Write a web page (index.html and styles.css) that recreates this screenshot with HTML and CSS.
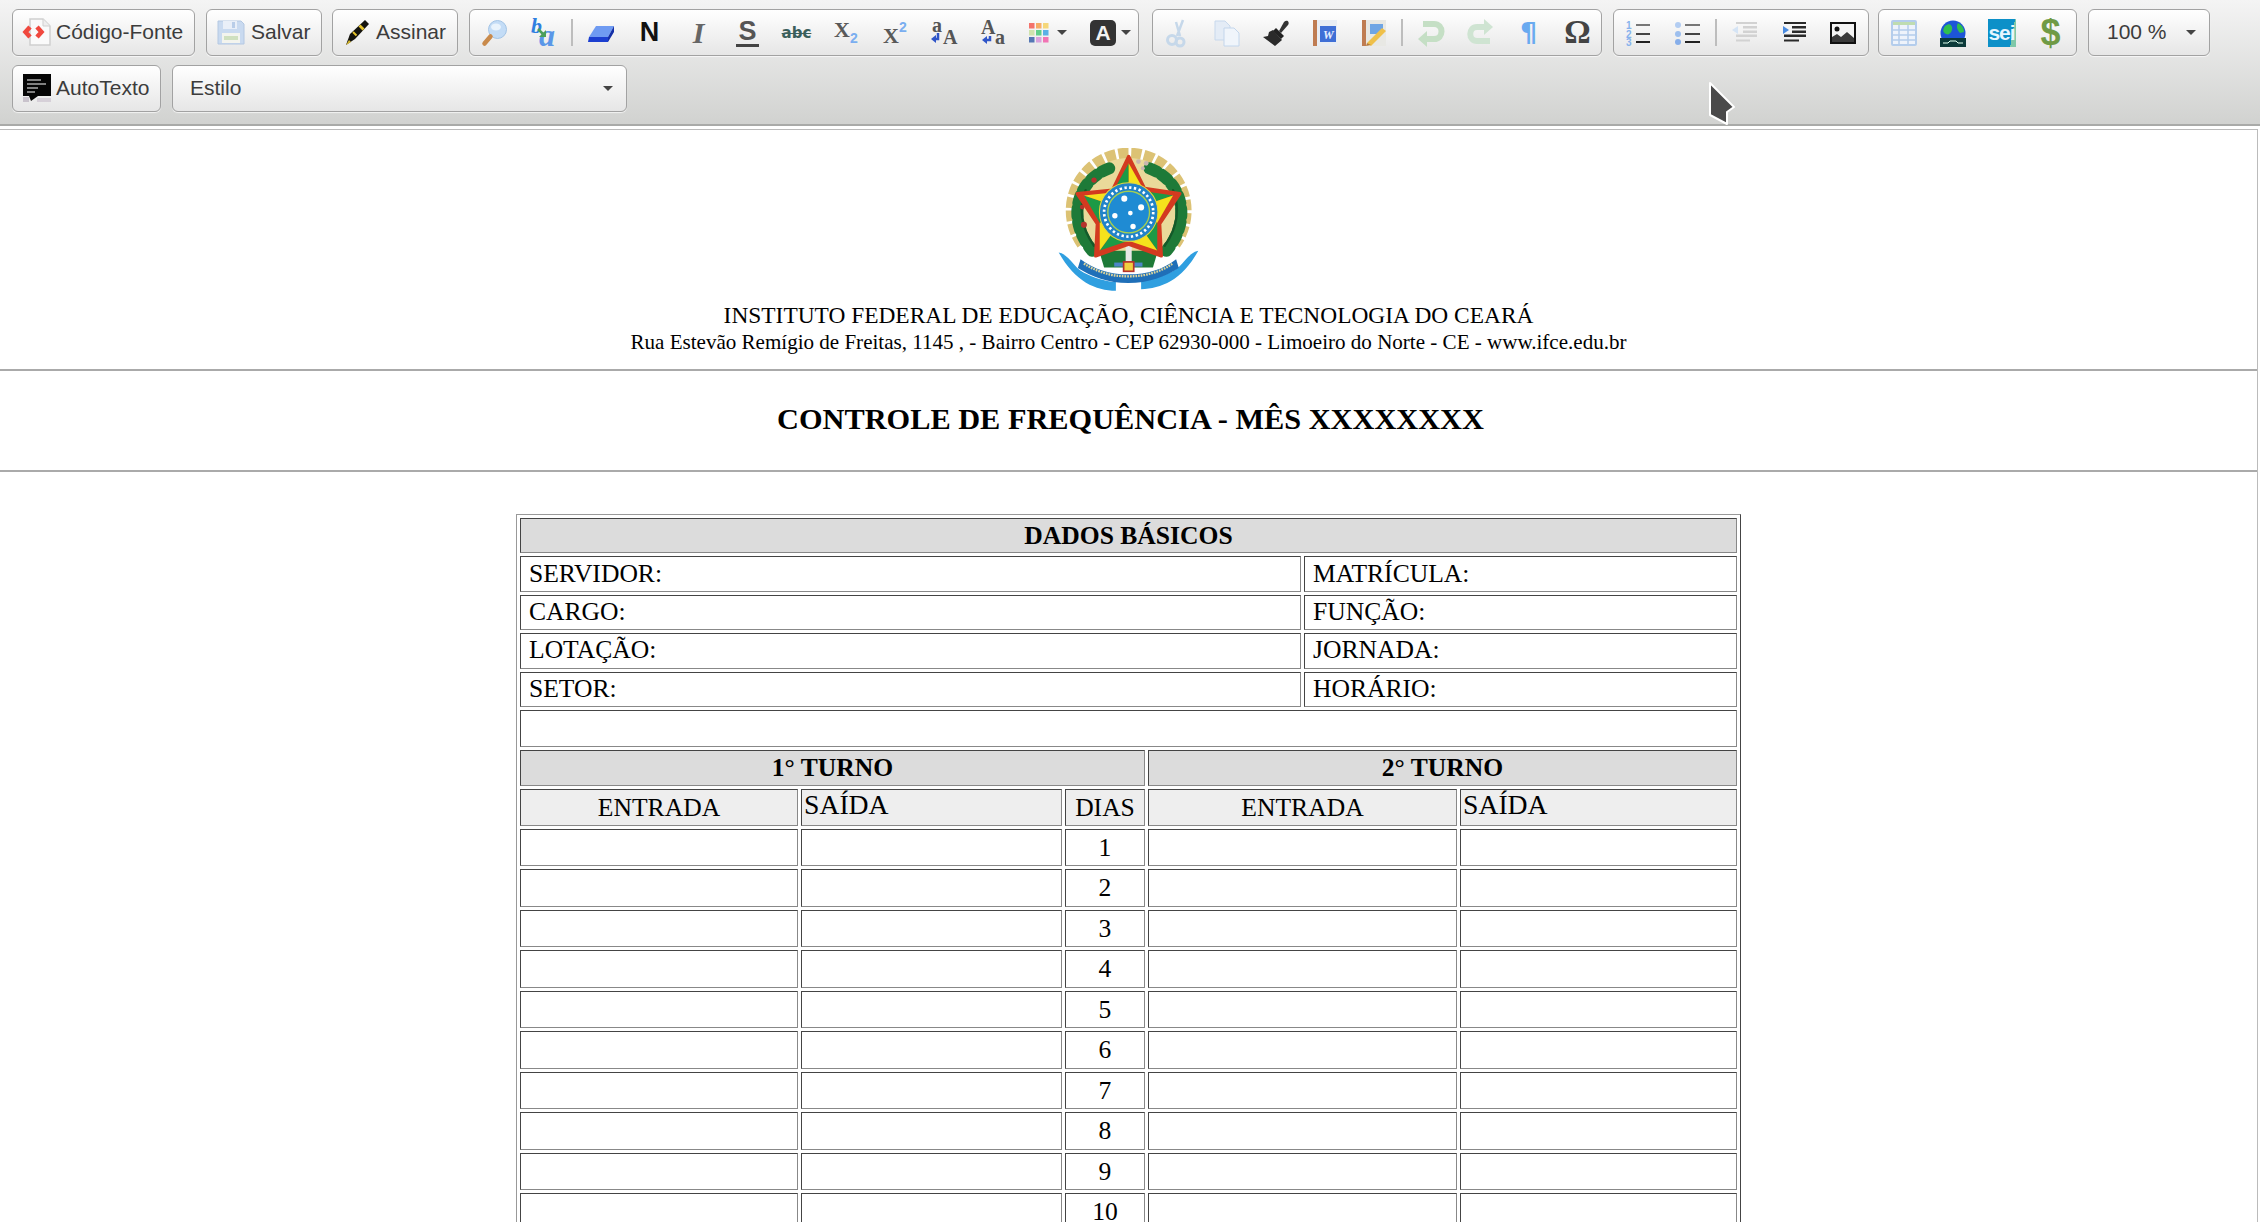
FILE: index.html
```html
<!DOCTYPE html>
<html lang="pt-BR">
<head>
<meta charset="utf-8">
<title>Controle de Frequência</title>
<link rel="stylesheet" href="styles.css">
</head>
<body>
<div class="page">
<header class="toolbar">
  <div class="tb-row">
    <button class="btn btn-code"><svg class="ic" viewBox="0 0 28 28"><path d="M7 1h13l7 7v19H7z" fill="#fafafa" stroke="#cfcfcf" stroke-width="1.500"/><path d="M20 1v7h7" fill="#eee" stroke="#cfcfcf"/><path d="M7 9 2.500 14 7 19M14 9 18.500 14 14 19" fill="none" stroke="#f0483e" stroke-width="4.500"/></svg><span>Código-Fonte</span></button>
    <button class="btn btn-save"><svg class="ic" viewBox="0 0 28 28"><path d="M1 3h23l3 3v20H1z" fill="#c9daf0" stroke="#b4c8e2"/><rect x="6" y="3" width="14" height="8" fill="#e9eff8"/><rect x="15" y="4" width="3" height="6" fill="#b9cde8"/><rect x="5" y="15" width="18" height="10" fill="#f3f4ee"/><rect x="7" y="18" width="14" height="4" fill="#cfe0bf"/></svg><span>Salvar</span></button>
    <button class="btn btn-sign"><svg class="ic" viewBox="0 0 28 28"><path d="M3 27 7 16 22 2l4 4-14 15z" fill="#15140f"/><path d="M15.500 8.500l4 4 2-2-4-4z" fill="#e6c42c"/><path d="M10 14l3.500 3.500" stroke="#e6c42c" stroke-width="2"/><path d="M3 27l3-5 2 2z" fill="#d8b92a"/></svg><span>Assinar</span></button>

    <div class="group grp-format">
      <button class="tool"><svg class="ic" viewBox="0 0 28 28"><circle cx="16.500" cy="10.500" r="9" fill="#c3dcf6" stroke="#a3c4e6"/><ellipse cx="15" cy="8" rx="5" ry="3.500" fill="#e9f3fc"/><path d="M9.500 17.500 3.500 24.500" stroke="#c98a4b" stroke-width="4.500" stroke-linecap="round"/></svg></button>
      <button class="tool"><svg class="ic" viewBox="0 0 28 28"><text x="1" y="14" class="t-rep">b</text><text x="9" y="26.500" class="t-rep t-rep2">a</text><path d="M8 10l6 6" stroke="#4ba05a" stroke-width="2.500"/><path d="M16 11v7h-7z" fill="#4ba05a"/></svg></button>
      <i class="sep"></i>
      <button class="tool"><svg class="ic" viewBox="0 0 28 28"><path d="M9 7h18l-6 11H2z" fill="#6f9bf2"/><path d="M2 18h19v5H1z" fill="#1c3fd0"/><path d="M21 18l6-11v6l-6 10z" fill="#1430a8"/></svg></button>
      <button class="tool"><span class="g-bold">N</span></button>
      <button class="tool"><span class="g-ital">I</span></button>
      <button class="tool"><span class="g-under">S</span></button>
      <button class="tool"><span class="g-strike">abc</span></button>
      <button class="tool"><svg class="ic" viewBox="0 0 28 28"><text x="2" y="18" class="t-x">X</text><text x="18" y="24" class="t-sub">2</text></svg></button>
      <button class="tool"><svg class="ic" viewBox="0 0 28 28"><text x="2" y="24" class="t-x">X</text><text x="18" y="13" class="t-sub">2</text></svg></button>
      <button class="tool"><svg class="ic" viewBox="0 0 28 28"><text x="2" y="12.500" class="t-case">a</text><text x="13" y="25" class="t-case">A</text><path d="M8 14v6H5" fill="none" stroke="#2f55c8" stroke-width="2.500"/><path d="M1 20l5-4v8z" fill="#2f55c8"/></svg></button>
      <button class="tool"><svg class="ic" viewBox="0 0 28 28"><text x="2" y="15" class="t-case">A</text><text x="16" y="25" class="t-case">a</text><path d="M11 17v4H7" fill="none" stroke="#2f55c8" stroke-width="2.500"/><path d="M3 21l5-4v8z" fill="#2f55c8"/></svg></button>
      <button class="tool tool-colors"><svg class="ic-sw" viewBox="0 0 20 20"><rect width="5.500" height="5.500" fill="#f4736c"/><rect x="7" width="5.500" height="5.500" fill="#f6ad67"/><rect x="14" width="5.500" height="5.500" fill="#f5d77a"/><rect y="7" width="5.500" height="5.500" fill="#cfe3ad"/><rect x="7" y="7" width="5.500" height="5.500" fill="#61cf8a"/><rect x="14" y="7" width="5.500" height="5.500" fill="#5ab1e6"/><rect y="14" width="5.500" height="5.500" fill="#5577b4"/><rect x="7" y="14" width="5.500" height="5.500" fill="#d9a2dd"/><rect x="14" y="14" width="5.500" height="5.500" fill="#f174b4"/></svg><b class="caret"></b></button>
      <button class="tool tool-font"><span class="g-abox">A</span><b class="caret"></b></button>
    </div>

    <div class="group grp-edit">
      <button class="tool"><svg class="ic" viewBox="0 0 28 28" fill="none" stroke="#c6d8ea"><path d="M19 1 13 17M12 3l4 14" stroke-width="2.500"/><circle cx="8" cy="21" r="4.500" stroke-width="3"/><circle cx="16" cy="23" r="4" stroke-width="3"/></svg></button>
      <button class="tool"><svg class="ic" viewBox="0 0 28 28"><path d="M2 2h10l5 5v14H2z" fill="#e4ecf6" stroke="#c7d8ec"/><path d="M11 9h10l5 5v13H11z" fill="#f0f5fb" stroke="#c3d6ec"/></svg></button>
      <button class="tool"><svg class="ic" viewBox="0 0 28 28"><path d="M17 12 22 3c3-3 6 0 4 3l-7 8z" fill="#333"/><path d="M14 9l8 8-3 3-8-8z" fill="#222"/><path d="M11 11l9 10-7 6-12-9 5-1 1-4z" fill="#2a2a2a"/></svg></button>
      <button class="tool"><svg class="ic" viewBox="0 0 28 28"><rect x="2" y="1" width="24" height="26" fill="#e8edf4"/><rect x="2" y="1" width="4" height="26" fill="#bf7c52"/><rect x="9" y="7" width="16" height="16" fill="#3f6fd6"/><text x="12" y="20" class="t-w">W</text></svg></button>
      <button class="tool"><svg class="ic" viewBox="0 0 28 28"><rect x="2" y="1" width="24" height="26" fill="#e8e8e4"/><rect x="2" y="1" width="4" height="26" fill="#bf7c52"/><rect x="10" y="5" width="13" height="10" fill="#6fa5e4"/><path d="M7 24 22 9l4 3-15 15z" fill="#efc04a"/><path d="M7 24l-1 3 5-1z" fill="#b77a3a"/></svg></button>
      <i class="sep"></i>
      <button class="tool"><svg class="ic" viewBox="0 0 28 28" fill="none" stroke="#c5dfc5" stroke-width="6"><path d="M6 5h11c10 0 10 15 0 15H8"/><path d="M10 12 1 20l9 8z" fill="#c5dfc5" stroke="none"/></svg></button>
      <button class="tool"><svg class="ic" viewBox="0 0 28 28" fill="none" stroke="#cfe4d2" stroke-width="6"><path d="M24 22H11C2 22 2 8 11 8h9"/><path d="M18 0l9 8-9 8z" fill="#cfe4d2" stroke="none"/></svg></button>
      <button class="tool"><span class="g-para">¶</span></button>
      <button class="tool"><span class="g-omega">Ω</span></button>
    </div>

    <div class="group grp-list">
      <button class="tool"><svg class="ic" viewBox="0 0 28 28"><text x="1" y="10" class="t-num">1</text><text x="1" y="18.500" class="t-num">2</text><text x="1" y="27" class="t-num">3</text><rect x="11" y="5" width="14" height="2" fill="#777"/><rect x="11" y="14" width="14" height="2" fill="#444"/><rect x="11" y="22" width="14" height="2" fill="#222"/></svg></button>
      <button class="tool"><svg class="ic" viewBox="0 0 28 28"><circle cx="4" cy="6" r="3" fill="#b3cdf2"/><circle cx="4" cy="15" r="3" fill="#9dbfee"/><circle cx="4" cy="23" r="3" fill="#86aeea"/><rect x="11" y="5" width="15" height="2" fill="#777"/><rect x="11" y="14" width="15" height="2" fill="#444"/><rect x="11" y="22" width="15" height="2" fill="#222"/></svg></button>
      <i class="sep"></i>
      <button class="tool"><svg class="ic" viewBox="0 0 28 28" fill="#d2d2d2"><rect x="5" y="3" width="21" height="2"/><rect x="12" y="7" width="14" height="2.500"/><rect x="12" y="11.500" width="14" height="2.500"/><rect x="5" y="15.500" width="21" height="2.500"/><rect x="5" y="20.500" width="14" height="2"/><path d="M1 11l6-4v8z" fill="#d5e4f5"/></svg></button>
      <button class="tool"><svg class="ic" viewBox="0 0 28 28" fill="#2a2a2a"><rect x="4" y="3" width="22" height="2"/><rect x="12" y="7" width="14" height="2.500"/><rect x="12" y="11.500" width="14" height="2.500"/><rect x="4" y="15.500" width="22" height="2.500"/><rect x="4" y="20.500" width="15" height="2"/><path d="M9 11 3 7v8z" fill="#4a8be0"/></svg></button>
      <button class="tool"><svg class="ic" viewBox="0 0 28 28"><rect x="2" y="4" width="24" height="20" fill="#f4f4f4" stroke="#111" stroke-width="2"/><circle cx="8" cy="10" r="2.500" fill="#111"/><path d="M3 23v-5l5-3 4 3 6-5 7 6v4z" fill="#3a3a3a"/></svg></button>
    </div>

    <div class="group grp-ins">
      <button class="tool"><svg class="ic" viewBox="0 0 28 28"><rect x="2" y="2" width="24" height="24" rx="1" fill="#eef3fb" stroke="#b4cdec" stroke-width="2"/><rect x="3" y="3" width="22" height="3" fill="#bfdcb0"/><path d="M3 11h22M3 16h22M3 21h22M9 6v20M18 6v20" stroke="#b4cdec" stroke-width="1.500"/></svg></button>
      <button class="tool"><svg class="ic" viewBox="0 0 28 28"><circle cx="14" cy="14" r="12.500" fill="#1d55d8"/><path d="M6 7c4-3 6-2 7 1s-2 9-6 7-3-5-1-8zM19 4c4 2 6 5 6 9l-4 1c-3-3-4-7-2-10z" fill="#2fbf4f"/><rect x="1" y="19" width="26" height="9" fill="#0c3a3a"/><path d="M4 24h5l2-2h6l2 2h5" stroke="#dfe" stroke-width="1" fill="none"/></svg></button>
      <button class="tool"><span class="g-sei">sei</span></button>
      <button class="tool"><span class="g-dollar">$</span></button>
    </div>

    <button class="btn btn-zoom"><span>100 %</span><b class="caret"></b></button>
  </div>

  <div class="tb-row">
    <button class="btn btn-auto"><svg class="ic" viewBox="0 0 28 28"><rect x="0" y="0" width="28" height="22" fill="#050505"/><path d="M6 22h9l-7 5z" fill="#050505"/><path d="M4 6h14M4 10h19M4 14h11M4 18h8" stroke="#a9a9a9" stroke-width="1.500"/><rect x="0" y="23" width="6" height="5" fill="#c9c3cc"/><rect x="14" y="24" width="14" height="4" fill="#d6d0d8"/></svg><span>AutoTexto</span></button>
    <button class="btn btn-style"><span>Estilo</span><b class="caret"></b></button>
  </div>
</header>

<main class="doc">
  <div class="letterhead">
    <svg class="emblem" viewBox="80 40 425 430">
      <path d="M155 325A170 170 0 1 1 431 325" fill="none" stroke="#dcc274" stroke-width="34" stroke-dasharray="30 8"/>
      <circle cx="293" cy="225" r="156" fill="#ead99a"/>
      <g fill="none" stroke="#1e7a38" stroke-linecap="round">
        <path d="M235 100C140 135 105 250 185 345" stroke-width="36" stroke-dasharray="24 16"/>
        <path d="M355 100C450 135 485 250 405 345" stroke-width="36" stroke-dasharray="24 16"/>
        <path d="M165 165C145 215 150 275 190 330" stroke="#14592a" stroke-width="7"/>
        <path d="M425 165C445 215 440 275 400 330" stroke="#14592a" stroke-width="7"/>
      </g>
      <circle cx="190" cy="135" r="8" fill="#b5322c"/><circle cx="160" cy="268" r="9" fill="#b5322c"/><circle cx="155" cy="215" r="7" fill="#b5322c"/>
      <circle cx="322" cy="80" r="7" fill="#c9b6b0"/><circle cx="345" cy="85" r="7" fill="#c9b6b0"/><circle cx="335" cy="100" r="6" fill="#c9b6b0"/>
      <path d="M85 350c30 5 45 45 75 60 30 15 60 25 95 28v26c-60-2-120-25-170-114z" fill="#2f9fe0"/>
      <path d="M500 345c-30 5-45 45-75 60-30 15-60 25-95 28v26c60-2 120-25 170-114z" fill="#2f9fe0"/>
      <path d="M150 370c40 30 85 45 142 45s105-15 142-45l8 26c-40 25-90 45-150 45s-110-20-150-45z" fill="#1f6fb8"/>
      <path d="M160 383c40 25 80 38 132 38s95-13 132-38" fill="none" stroke="#ddd49a" stroke-width="7" stroke-dasharray="5 3"/>
      <path d="M205 345h175l-15 50H220z" fill="#1e7a38"/>
      <rect x="284" y="320" width="18" height="60" fill="#e8e8e8"/>
      <rect x="250" y="380" width="84" height="12" fill="#4d86c8"/>
      <rect x="278" y="378" width="30" height="28" fill="#f0d040" stroke="#b5322c" stroke-width="5"/>
      <path d="M293 65 340 160 445 175 385 265 390 360 293 325 195 360 200 265 140 175 245 165z" fill="#d33a20" stroke="#d33a20" stroke-width="10" stroke-linejoin="round"/>
      <path d="M293 85 245 172 293 225z" fill="#1c9a46"/><path d="M293 85 340 168 293 225z" fill="#f5e21c"/>
      <path d="M425 181 340 168 293 225z" fill="#1c9a46"/><path d="M425 181 378 262 293 225z" fill="#f5e21c"/>
      <path d="M378 344 378 262 293 225z" fill="#1c9a46"/><path d="M378 344 293 315 293 225z" fill="#f5e21c"/>
      <path d="M207 344 293 315 293 225z" fill="#1c9a46"/><path d="M207 344 207 262 293 225z" fill="#f5e21c"/>
      <path d="M160 181 207 262 293 225z" fill="#1c9a46"/><path d="M160 181 245 172 293 225z" fill="#f5e21c"/>
      <circle cx="293" cy="230" r="87" fill="#2183c9" stroke="#e8d83a" stroke-width="3"/>
      <circle cx="293" cy="230" r="73" fill="none" stroke="#fff" stroke-width="8" stroke-dasharray="7 7.300"/>
      <circle cx="293" cy="230" r="62" fill="#1f8bd3" stroke="#a6cf52" stroke-width="4"/>
      <g fill="#fff"><circle cx="280" cy="190" r="9"/><circle cx="330" cy="216" r="9"/><circle cx="252" cy="241" r="8"/><circle cx="298" cy="233" r="7"/><circle cx="306" cy="273" r="8"/></g>
    </svg>
    <p class="lh-name">INSTITUTO FEDERAL DE EDUCAÇÃO, CIÊNCIA E TECNOLOGIA DO CEARÁ</p>
    <p class="lh-addr">Rua Estevão Remígio de Freitas, 1145 , - Bairro Centro - CEP 62930-000 - Limoeiro do Norte - CE - www.ifce.edu.br</p>
  </div>
  <hr class="rule">
  <h1 class="title">CONTROLE DE FREQUÊNCIA - MÊS XXXXXXXX</h1>
  <hr class="rule">
  <table class="sheet">
    <colgroup><col class="c1"><col class="c2"><col class="c3"><col class="c4"><col class="c5"><col class="c6"></colgroup>
    <tbody>
      <tr class="r-text"><th colspan="6" class="head">DADOS BÁSICOS</th></tr>
      <tr class="r-text"><td colspan="4" class="lbl">SERVIDOR:</td><td colspan="2" class="lbl">MATRÍCULA:</td></tr>
      <tr class="r-text"><td colspan="4" class="lbl">CARGO:</td><td colspan="2" class="lbl">FUNÇÃO:</td></tr>
      <tr class="r-text"><td colspan="4" class="lbl">LOTAÇÃO:</td><td colspan="2" class="lbl">JORNADA:</td></tr>
      <tr class="r-text"><td colspan="4" class="lbl">SETOR:</td><td colspan="2" class="lbl">HORÁRIO:</td></tr>
      <tr class="r-empty"><td colspan="6"></td></tr>
      <tr class="r-sub"><th colspan="3" class="head">1° TURNO</th><th colspan="3" class="head">2° TURNO</th></tr>
      <tr class="r-sub"><td class="sub">ENTRADA</td><td class="sub sub-left">SAÍDA</td><td class="sub">DIAS</td><td colspan="2" class="sub">ENTRADA</td><td class="sub sub-left">SAÍDA</td></tr>
      <tr class="r-day"><td></td><td></td><td class="day">1</td><td colspan="2"></td><td></td></tr>
      <tr class="r-day"><td></td><td></td><td class="day">2</td><td colspan="2"></td><td></td></tr>
      <tr class="r-day"><td></td><td></td><td class="day">3</td><td colspan="2"></td><td></td></tr>
      <tr class="r-day"><td></td><td></td><td class="day">4</td><td colspan="2"></td><td></td></tr>
      <tr class="r-day"><td></td><td></td><td class="day">5</td><td colspan="2"></td><td></td></tr>
      <tr class="r-day"><td></td><td></td><td class="day">6</td><td colspan="2"></td><td></td></tr>
      <tr class="r-day"><td></td><td></td><td class="day">7</td><td colspan="2"></td><td></td></tr>
      <tr class="r-day"><td></td><td></td><td class="day">8</td><td colspan="2"></td><td></td></tr>
      <tr class="r-day"><td></td><td></td><td class="day">9</td><td colspan="2"></td><td></td></tr>
      <tr class="r-day"><td></td><td></td><td class="day">10</td><td colspan="2"></td><td></td></tr>
    </tbody>
  </table>
</main>
<svg class="cursor" viewBox="0 0 28 44"><path d="M2 1 26 25 19 30V42L2 33z" fill="#4a4a4a" stroke="#fff" stroke-width="2" stroke-linejoin="round"/></svg>
</div>
</body>
</html>
```
FILE: styles.css
```css
* { box-sizing: border-box; }
html, body { margin: 0; height: 100%; overflow: hidden; background: #fff; }
.page { position: relative; height: 1222px; overflow: hidden; display: flex; flex-direction: column; }

.toolbar {
  flex: none; height: 126px; padding: 9px 0 0 12px;
  background: linear-gradient(#f4f4f4, #d1d2d0);
  border-bottom: 2px solid #a9aaa8;
  font-family: "Liberation Sans", Arial, sans-serif;
  display: flex; flex-direction: column; gap: 9px;
}
.tb-row { display: flex; align-items: stretch; height: 47px; }

.btn, .group {
  border: 1px solid #a2a2a2; border-radius: 6px;
  background: linear-gradient(#fff, #e6e6e6);
  box-shadow: 0 1px 1px rgba(255,255,255,.7);
}
.btn {
  display: flex; align-items: center; gap: 5px; padding: 0 10px 1px;
  font: 21px "Liberation Sans", Arial, sans-serif; color: #3c3c3c;
}
.btn-code { width: 183px; }
.btn-save { width: 116px; margin-left: 11px; gap: 6px; }
.btn-sign { width: 126px; margin-left: 10px; gap: 5px; }
.btn-auto { width: 149px; }
.btn-style { width: 455px; margin-left: 11px; padding: 0 13px 1px 17px; justify-content: space-between; }
.btn-zoom { width: 122px; margin-left: 11px; padding: 0 13px 1px 18px; justify-content: space-between; }

.group { display: flex; align-items: stretch; margin-left: 11px; }
.grp-format { width: 670px; }
.grp-edit { width: 450px; margin-left: 13px; }
.grp-list { width: 256px; }
.grp-ins { width: 199px; margin-left: 9px; }

.tool {
  width: 49px; padding: 0; border: 0; background: none; flex: none;
  display: flex; align-items: center; justify-content: center;
  font-family: "Liberation Sans", Arial, sans-serif;
}
.tool-colors { width: 59px; padding-left: 12px; gap: 8px; justify-content: flex-start; }
.tool-font { width: 63px; padding-left: 14px; gap: 5px; justify-content: flex-start; }
.sep { flex: none; width: 2px; margin: 9px 3px; background: #bdbdbd; }

.ic { width: 28px; height: 28px; flex: none; display: block; overflow: visible; }
.ic-sw { width: 20px; height: 20px; flex: none; display: block; }
.caret { flex: none; width: 0; height: 0; border: 5px solid transparent; border-top: 5px solid #444; border-bottom: 0; }

.g-bold { font: bold 27px "Liberation Sans", Arial, sans-serif; color: #111; }
.g-ital { font: italic bold 30px "Liberation Serif", serif; color: #666; }
.g-under { font: bold 27px/26px "Liberation Sans", Arial, sans-serif; color: #555; border-bottom: 3px solid #444; padding: 0 2px; }
.g-strike { font: bold 15px "DejaVu Sans", sans-serif; color: #3b5f5c; text-decoration: line-through; }
.g-para { font: bold 27px "DejaVu Sans", sans-serif; color: #6aaaf0; }
.g-omega { font: bold 33px "Liberation Serif", serif; color: #444; }
.g-abox {
  width: 26px; height: 26px; border-radius: 5px; background: #333; flex: none;
  font: bold 21px/26px "Liberation Sans", Arial, sans-serif; color: #f2f2f2; text-align: center;
}
.g-sei {
  width: 28px; height: 28px; background: linear-gradient(100deg, #0c90c8 82%, #7fc8a8 82%);
  font: bold 21px/27px "Liberation Sans", Arial, sans-serif; color: #e6f6ff; text-align: center; letter-spacing: -1px;
}
.g-dollar { font: bold 36px "Liberation Sans", Arial, sans-serif; color: #6f9a45; }

.t-rep { font: italic bold 22px "Liberation Serif", serif; fill: #2f7fe0; }
.t-rep2 { font-size: 32px; fill: #5a97e8; }
.t-x { font: bold 22px "Liberation Serif", serif; fill: #595959; }
.t-sub { font: bold 14px "Liberation Sans", Arial, sans-serif; fill: #7aaef0; }
.t-case { font: bold 20px "Liberation Serif", serif; fill: #555; }
.t-num { font: bold 10px "Liberation Sans", Arial, sans-serif; fill: #86b2ec; }
.t-w { font: bold italic 12px "Liberation Serif", serif; fill: #e8f0ff; }

.doc {
  flex: none; margin-top: 3px; height: 1100px; margin-right: 2px;
  border-top: 1px solid #bbb; border-right: 1px solid #bbb; background: #fff;
  font-family: "Liberation Serif", "Times New Roman", serif; color: #000;
}
.letterhead { text-align: center; padding-top: 18px; }
.emblem { display: block; width: 143px; height: 145px; margin: 0 auto; filter: blur(.7px); }
.lh-name { margin: 8px 0 0; font-size: 23.400px; line-height: 29px; }
.lh-addr { margin: 0; font-size: 21.050px; line-height: 25px; }
.rule { margin: 14px 0 0; height: 2px; border: 0; background: #aaa; }
.title { margin: 0; padding-left: 4px; height: 99px; font-size: 30.330px; line-height: 96px; font-weight: bold; text-align: center; }
.title + .rule { margin: 0; }

.sheet {
  margin: 42px auto 0; width: 1225px; table-layout: fixed;
  border-collapse: separate; border-spacing: 3px;
  border: 1px solid; border-color: #999 #444 #444 #999;
  font-size: 25.600px;
}
.c1 { width: 278px; } .c2 { width: 261px; } .c3 { width: 80px; }
.c4 { width: 153px; } .c5 { width: 153px; } .c6 { width: 277px; }
.sheet th, .sheet td {
  padding: 0; border: 1px solid; border-color: #444 #888 #888 #444;
  line-height: 30px; font-weight: normal;
}
.r-text > * { height: 35.400px; }
.r-empty > * { height: 37px; }
.r-sub > * { height: 36.500px; }
.r-day > * { height: 37.500px; }
.sheet .head { background: #dcdcdc; font-weight: bold; text-align: center; }
.sheet .lbl { padding: 0 0 1px 8px; }
.sub { background: #eee; text-align: center; }
.sheet .sub-left { text-align: left; font-size: 27.700px; padding-left: 2px; vertical-align: top; }
.day { text-align: center; }

.cursor { position: absolute; left: 1708px; top: 82px; width: 28px; height: 44px; }
```
